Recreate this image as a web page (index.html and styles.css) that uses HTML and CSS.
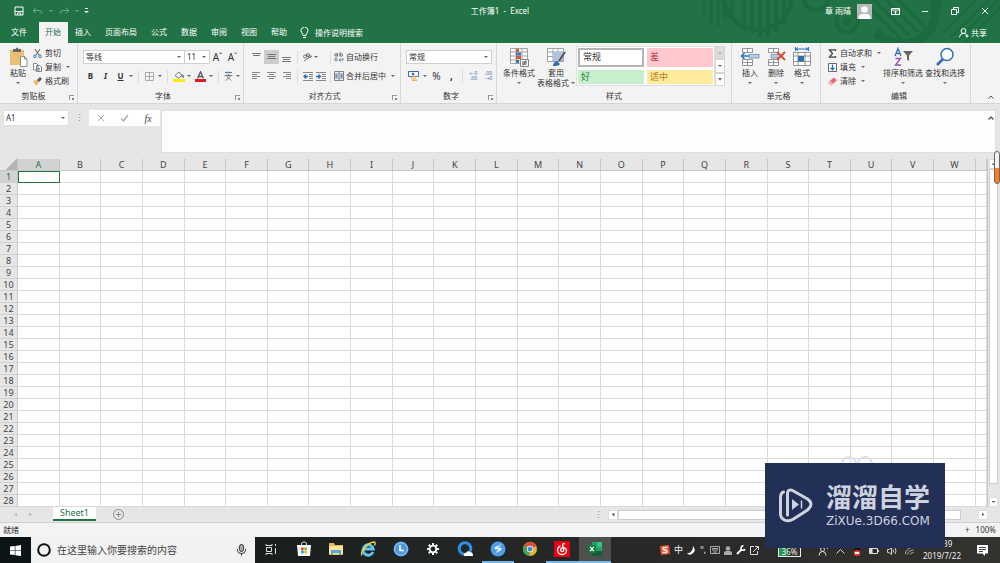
FILE: index.html
```
<!DOCTYPE html>
<html lang="zh-CN">
<head>
<meta charset="UTF-8">
<meta name="viewport" content="width=device-width, initial-scale=1.0">
<title>工作簿1 - Excel</title>
<link rel="stylesheet" href="styles.css">
</head>
<body>

<header class="app-header">
    <svg class="header-art" width="300" height="43" viewBox="0 0 300 43" fill="none" stroke="#1c6a3d">
        <path stroke-width="3" d="M4 0v17M11 0v24M18 0v26M25 0v20M32 0v12"/>
        <path stroke-width="4" d="M44 0v24M52 0v34M60 0v37M68 0v37M76 0v32M84 0v24"/>
        <circle cx="58" cy="-4" r="34" stroke-width="5"/>
        <circle cx="116" cy="-2" r="12" stroke-width="5"/>
        <circle cx="147" cy="21" r="11" stroke-width="4"/>
        <circle cx="147" cy="21" r="4" fill="#1c6a3d"/>
        <path stroke-width="2" d="M166 4l36 36M174 0l36 36M182 -4l36 36M190 -8l36 36"/>
        <path stroke-width="9" d="M176 32a34 34 0 0 0 60-22v-14"/>
        <path stroke-width="2" d="M250 38l44-44M258 40l44-44M266 42l44-44M244 32l34-34"/>
    </svg>
    <div class="title-bar">
        <div class="quick-access">
            <button aria-label="保存"><svg width="10" height="10" viewBox="0 0 10 10" fill="none" stroke="#fff"><path d="M1 1h8v8H1zM1 5.500h8M3.500 9V7h3v2"/></svg></button>
            <button class="faded" aria-label="撤消"><svg width="12" height="8" viewBox="0 0 12 8" fill="none" stroke="#fff"><path d="M4 1L1 3.500l3 2.500M1 3.500h6q3 0 3 3.500"/></svg></button>
            <i class="caret faded"></i>
            <button class="faded" aria-label="恢复"><svg width="12" height="8" viewBox="0 0 12 8" fill="none" stroke="#fff"><path d="M8 1l3 2.500L8 6M11 3.500H5Q2 3.500 2 7"/></svg></button>
            <i class="caret faded"></i>
            <button aria-label="自定义快速访问工具栏"><svg width="5" height="6" viewBox="0 0 5 6" fill="#fff"><path d="M1 0h3v1H1zM0 3h5L2.500 5z"/></svg></button>
        </div>
        <h1>工作簿1 &nbsp;- &nbsp;Excel</h1>
        <div class="window-tools">
            <span>章 雨晴</span>
            <svg class="avatar" width="15" height="15" viewBox="0 0 15 15"><path fill="#b8b8b8" d="M0 0h15v15H0z"/><circle cx="7.500" cy="5.500" r="3.300" fill="#fff"/><path d="M1.500 15q0-5 4-5h4q4 0 4 5z" fill="#fff"/></svg>
            <button aria-label="功能区显示选项"><svg width="9" height="7" viewBox="0 0 9 7" fill="none" stroke="#fff"><path d="M.5.5h8v6h-8zM.5 2h8M4.500 6V3M3 4.500L4.500 3 6 4.500"/></svg></button>
            <button aria-label="最小化"><svg width="8" height="8" viewBox="0 0 8 8" stroke="#fff"><path d="M1 4.500h6"/></svg></button>
            <button aria-label="还原"><svg width="8" height="8" viewBox="0 0 8 8" fill="none" stroke="#fff"><path d="M.5 2.500h5v5h-5zM2.500 2V.5h5v5H6"/></svg></button>
            <button aria-label="关闭"><svg width="8" height="8" viewBox="0 0 8 8" stroke="#fff"><path d="M1 1l6 6M7 1L1 7"/></svg></button>
        </div>
    </div>
    <nav class="tabs">
        <a href="#" class="file">文件</a>
        <a href="#" class="active">开始</a>
        <a href="#">插入</a>
        <a href="#">页面布局</a>
        <a href="#">公式</a>
        <a href="#">数据</a>
        <a href="#">审阅</a>
        <a href="#">视图</a>
        <a href="#">帮助</a>
        <a href="#" class="tell-me"><svg width="9" height="12" viewBox="0 0 9 12" fill="none" stroke="#fff"><path d="M3 8.500Q3 7 1.800 5.800A3.500 3.500 0 1 1 7.200 5.800Q6 7 6 8.500zM3 10.500h3"/></svg>操作说明搜索</a>
        <a href="#" class="share"><svg width="10" height="10" viewBox="0 0 10 10" fill="none" stroke="#fff"><circle cx="4.500" cy="3" r="2.400"/><path d="M.5 9.500q0-4 4-4 2 0 3 1M8 6.500v3M6.500 8h3"/></svg>共享</a>
    </nav>
</header>

<section class="ribbon">
    <div class="group clipboard">
        <div class="group-body">
            <button class="big"><svg width="20" height="20" viewBox="0 0 20 20"><path fill="#eabf74" d="M2 3h14v15H2z"/><path fill="#666" d="M5 5V2h2.500q1.500-3 3 0H13v3z"/><path fill="#fff" stroke="#777" stroke-width=".8" d="M12.500 9.500h4l2.500 2.500v7.500h-6.500zM16.500 9.500V12H19"/></svg>粘贴<i class="caret"></i></button>
            <div class="list">
                <button><svg width="9" height="9" viewBox="0 0 9 9" fill="none" stroke="#555"><path d="M2 0l4 6M7 0L3 6"/><circle cx="2" cy="7.300" r="1.300" stroke="#3b77b5"/><circle cx="7" cy="7.300" r="1.300" stroke="#3b77b5"/></svg>剪切</button>
                <button><svg width="9" height="9" viewBox="0 0 9 9" fill="#fff" stroke="#666" stroke-width=".8"><path d="M.5.5h3L5 2v5H.5zM3.500 2.500h3L8.500 4v4.500h-5z"/><path stroke="#3b77b5" d="M5 5.500h2M5 7h2"/></svg>复制<i class="caret"></i></button>
                <button><svg width="9" height="9" viewBox="0 0 9 9"><path fill="#eab765" d="M0 4l4-1 2 2-3 4z"/><path fill="#555" d="M4 3l3-3 2 2-3 3z"/></svg>格式刷</button>
            </div>
        </div>
        <div class="group-label">剪贴板</div><i class="launcher"></i>
    </div>

    <div class="group font">
        <div class="group-body rows">
            <div class="row">
                <span class="combo name"><select aria-label="字体"><option>等线</option></select></span>
                <span class="combo size"><select aria-label="字号"><option>11</option></select></span>
                <button class="tool letter">A<sup>ˆ</sup></button>
                <button class="tool letter">A<sup>ˇ</sup></button>
            </div>
            <div class="row">
                <button class="tool"><b>B</b></button>
                <button class="tool"><b><em>I</em></b></button>
                <button class="tool"><b><u>U</u></b></button>
                <i class="caret"></i><i class="sep"></i>
                <button class="tool" aria-label="边框"><svg width="9" height="9" viewBox="0 0 9 9" fill="none" stroke="#999" stroke-width=".8"><path d="M.5.5h8v8h-8zM4.500.5v8M.5 4.500h8"/></svg></button>
                <i class="caret"></i><i class="sep"></i>
                <button class="tool" aria-label="填充颜色"><svg width="12" height="11" viewBox="0 0 12 11"><path fill="#fff" stroke="#666" stroke-width=".9" d="M2 4.500L6 1l3 3.500L5.500 7z"/><path fill="#3b77b5" d="M9 3q3 2 1.500 4Q9 7 9 3z"/><path fill="#ffeb00" d="M0 8h12v3H0z"/></svg></button>
                <i class="caret"></i>
                <button class="tool" aria-label="字体颜色"><svg width="11" height="11" viewBox="0 0 11 11"><path fill="none" stroke="#555" stroke-width="1.300" d="M2.500 7.500L5.500.8l3 6.700M3.700 5.500h3.600"/><path fill="#e3171f" d="M0 8h11v3H0z"/></svg></button>
                <i class="caret"></i><i class="sep"></i>
                <button class="tool narrow" aria-label="显示拼音字段"><svg width="9" height="10" viewBox="0 0 9 10" fill="none" stroke="#666" stroke-width=".9"><path stroke="#3b77b5" d="M1 1.500h7M3 .5v2M6 .5v2"/><path d="M.5 4.500h8M4.500 3v1.500M2 4.500l5 5M7 4.500l-5 5"/></svg></button>
                <i class="caret"></i>
            </div>
        </div>
        <div class="group-label">字体</div><i class="launcher"></i>
    </div>

    <div class="group align">
        <div class="group-body rows">
            <div class="row">
                <button class="tool" aria-label="顶端对齐"><svg width="9" height="10" viewBox="0 0 9 10" stroke="#777"><path d="M0 1.500h9M1 3.500h7"/></svg></button>
                <button class="tool pressed" aria-label="垂直居中"><svg width="9" height="10" viewBox="0 0 9 10" stroke="#777"><path d="M0 2.500h9M1 4.500h7M0 6.500h9"/></svg></button>
                <button class="tool" aria-label="底端对齐"><svg width="9" height="10" viewBox="0 0 9 10" stroke="#777"><path d="M0 5.500h9M1 7.500h7M0 9.500h9"/></svg></button>
                <i class="sep"></i>
                <button class="tool narrow" aria-label="方向"><svg width="11" height="10" viewBox="0 0 11 10" fill="none" stroke="#666" stroke-width=".9"><circle cx="3" cy="4.500" r="1.500"/><circle cx="6" cy="3" r="1.500"/><path d="M4 2l3 4M2 9l7-5M7 3.500L9.500 4 8 6"/></svg></button>
                <i class="caret"></i>
                <i class="sep wide"></i>
                <button class="labelled"><svg width="10" height="10" viewBox="0 0 10 10" fill="none" stroke="#666" stroke-width=".9"><circle cx="2" cy="3" r="1.300"/><path d="M3.500 1v3.500M6 0v4.500"/><circle cx="7.300" cy="3" r="1.300"/><circle cx="2" cy="7.500" r="1.300"/><path stroke="#3b77b5" d="M9 6v2H5M6.500 6.500L5 8l1.500 1.500"/></svg>自动换行</button>
            </div>
            <div class="row">
                <button class="tool" aria-label="左对齐"><svg width="9" height="8" viewBox="0 0 9 8" stroke="#888"><path d="M0 .5h8M0 2.500h5M0 4.500h8M0 6.500h5"/></svg></button>
                <button class="tool" aria-label="居中"><svg width="9" height="8" viewBox="0 0 9 8" stroke="#888"><path d="M0 .5h9M2 2.500h5M0 4.500h9M2 6.500h5"/></svg></button>
                <button class="tool" aria-label="右对齐"><svg width="9" height="8" viewBox="0 0 9 8" stroke="#888"><path d="M1 .5h8M4 2.500h5M1 4.500h8M4 6.500h5"/></svg></button>
                <i class="sep"></i>
                <button class="tool narrow" aria-label="减少缩进量"><svg width="10" height="9" viewBox="0 0 10 9" fill="none" stroke="#888"><path d="M0 .5h10M6 2.500h4M6 4.500h4M6 6.500h4M0 8.500h10"/><path stroke="#2f6fb0" stroke-width="1.300" d="M5 4.500H1M3 2.500l-2 2 2 2"/></svg></button>
                <button class="tool narrow" aria-label="增加缩进量"><svg width="10" height="9" viewBox="0 0 10 9" fill="none" stroke="#888"><path d="M0 .5h10M6 2.500h4M6 4.500h4M6 6.500h4M0 8.500h10"/><path stroke="#2f6fb0" stroke-width="1.300" d="M0 4.500h4M2.500 2.500l2 2-2 2"/></svg></button>
                <i class="sep"></i>
                <button class="labelled"><svg width="10" height="10" viewBox="0 0 10 10" fill="none" stroke="#777" stroke-width=".9"><path d="M.5.5h9v9h-9zM.5 3h9M.5 7h9M5 .5V3M5 7v2.500"/><path stroke="#2f6fb0" d="M1.500 5h7M3 3.800L1.500 5 3 6.200M7 3.800L8.500 5 7 6.200"/></svg>合并后居中<i class="caret"></i></button>
            </div>
        </div>
        <div class="group-label">对齐方式</div><i class="launcher"></i>
    </div>

    <div class="group number">
        <div class="group-body rows">
            <div class="row">
                <span class="combo format"><select aria-label="数字格式"><option>常规</option></select></span>
            </div>
            <div class="row">
                <button class="tool" aria-label="会计数字格式"><svg width="11" height="10" viewBox="0 0 11 10"><path fill="#fff" stroke="#2f6fb0" d="M.5.5h10v5H.5z"/><circle cx="5" cy="3" r="1.300" fill="#2f6fb0"/><path fill="#e9b25c" d="M4 4.500h5v1.300H4zM3 6.500h5v1.300H3zM4 8.500h5V10H4z"/></svg></button>
                <i class="caret"></i>
                <button class="tool letter">%</button>
                <button class="tool letter"><b>,</b></button>
                <i class="sep"></i>
                <button class="tool decimals" aria-label="增加小数位数"><span>←0<br>.00</span></button>
                <button class="tool decimals" aria-label="减少小数位数"><span>.00<br>→0</span></button>
            </div>
        </div>
        <div class="group-label">数字</div><i class="launcher"></i>
    </div>

    <div class="group styles">
        <div class="group-body">
            <button class="big"><svg width="20" height="20" viewBox="0 0 20 20"><path fill="#fff" stroke="#999" stroke-width=".9" d="M1.500 1.500h17v15h-17zM1.500 5h17M1.500 9h17M1.500 13h17M7 1.500v15M13 1.500v15"/><path fill="#d6583f" d="M7 2h3v3H7zM7 9h5v3H7z"/><path fill="#3b77b5" d="M7 5.500h5v3H7zM7 13h3v3H7z"/><path fill="#fff" stroke="#777" stroke-width=".9" d="M11.500 12.500h8v7h-8z"/><path stroke="#444" stroke-width=".9" d="M13 15h5M13 17h5M17 13.500l-3 5"/></svg>条件格式<i class="caret"></i></button>
            <button class="big table-format"><svg width="20" height="20" viewBox="0 0 20 20"><path fill="#fff" stroke="#999" stroke-width=".9" d="M1.500 1.500h16v13h-16zM1.500 5h16M7 1.500v13M12 1.500v13M1.500 9.500h16"/><path fill="#aac4e2" d="M7 5h10v9H7z"/><path fill="#2f6fb0" d="M7 19q0-4 4-5l3 3q-1 2-7 2z"/><path stroke="#555" stroke-width="2" d="M13 14l6-9"/></svg>套用<span>表格格式<i class="caret"></i></span></button>
            <div class="gallery">
                <button class="swatch normal">常规</button>
                <button class="swatch bad">差</button>
                <button class="swatch good">好</button>
                <button class="swatch neutral">适中</button>
            </div>
            <div class="gallery-scroll">
                <button class="off" aria-label="上一行"><i class="caret up"></i></button>
                <button aria-label="下一行"><i class="caret"></i></button>
                <button aria-label="其他"><i class="caret more"></i></button>
            </div>
        </div>
        <div class="group-label">样式</div>
    </div>

    <div class="group cells">
        <div class="group-body">
            <button class="big"><svg width="20" height="20" viewBox="0 0 20 20"><path fill="#fff" stroke="#888" stroke-width=".9" d="M2.500 1.500h10v4h-10zM7.500 1.500v4M2.500 12.500h10v6h-10zM7.500 12.500v6M2.500 15.500h10"/><path fill="#b9cfe6" stroke="#6b8db3" stroke-width=".8" d="M9 7.500h10v3.500H9z"/><path fill="none" stroke="#2576c7" stroke-width="1.500" d="M9 9H1.500M4.500 6l-3 3 3 3"/></svg>插入<i class="caret"></i></button>
            <button class="big"><svg width="20" height="20" viewBox="0 0 20 20"><path fill="#fff" stroke="#888" stroke-width=".9" d="M2.500 1.500h10v4h-10zM7.500 1.500v4M2.500 12.500h10v6h-10zM7.500 12.500v6M2.500 15.500h10"/><path fill="#b9cfe6" stroke="#6b8db3" stroke-width=".8" d="M5 7.500h7v3.500H5z"/><path stroke="#d6482e" stroke-width="1.800" d="M11 5l8 8M19 5l-8 8"/></svg>删除<i class="caret"></i></button>
            <button class="big"><svg width="20" height="20" viewBox="0 0 20 20"><path fill="none" stroke="#2576c7" d="M3.500 0v4M16.500 0v4M4 2h12M6 .5L4 2l2 1.500M14 .5L16 2l-2 1.500"/><path fill="#fff" stroke="#888" stroke-width=".9" d="M1.500 5.500h17v13h-17zM1.500 9h17M1.500 14.500h17M6 5.500v13M13 5.500v13"/><path fill="#2f6fb0" d="M6 9h6v5.500H6z"/></svg>格式<i class="caret"></i></button>
        </div>
        <div class="group-label">单元格</div>
    </div>

    <div class="group editing">
        <div class="group-body">
            <div class="list">
                <button><svg width="9" height="9" viewBox="0 0 9 9" fill="none" stroke="#444" stroke-width="1.300"><path d="M7.500 2V.8H1.500L4.500 4.500 1.500 8.200h6V7"/></svg>自动求和<i class="caret"></i></button>
                <button><svg width="9" height="9" viewBox="0 0 9 9" fill="#fff" stroke="#666"><path d="M.5.5h8v8h-8z"/><path fill="none" stroke="#2576c7" stroke-width="1.300" d="M4.500 1.500v5M2.500 4.800l2 2 2-2"/></svg>填充<i class="caret"></i></button>
                <button><svg width="9" height="9" viewBox="0 0 9 9"><path fill="#e5697b" d="M0 6l5.500-5.500L9 3 3.500 8.500z"/><path fill="#f4b6bf" d="M0 6l2-2 3.500 2.500-2 2z"/></svg>清除<i class="caret"></i></button>
            </div>
            <button class="big sort"><svg width="20" height="20" viewBox="0 0 20 20" fill="none" stroke-width="1.400"><path stroke="#3b77b5" d="M2 9l3-7.500L8 9M3 6.500h4"/><path stroke="#9a53b5" d="M2.500 11.500h5l-5 6.500h5.500"/><path fill="#666" d="M10 4h10l-4 4.500v5.500l-2-1.500V8.500z"/></svg>排序和筛选<i class="caret"></i></button>
            <button class="big sort"><svg width="20" height="20" viewBox="0 0 20 20" fill="#fff" stroke="#2f6fb0"><path stroke-width="2.600" d="M8 12l-6 6"/><circle cx="12" cy="7.500" r="6" stroke-width="1.500"/></svg>查找和选择<i class="caret"></i></button>
        </div>
        <div class="group-label">编辑</div>
    </div>
    <button class="collapse" aria-label="折叠功能区"><svg width="6" height="4" viewBox="0 0 6 4" fill="none" stroke="#555"><path d="M.5 3.500L3 1l2.500 2.500"/></svg></button>
</section>

<section class="formula-bar">
    <span class="combo name-box"><select aria-label="名称框"><option>A1</option></select></span>
    <span class="dots">⋮</span>
    <div class="formula-buttons">
        <button aria-label="取消"><svg width="8" height="8" viewBox="0 0 8 8" stroke="#aaa"><path d="M1 1l6 6M7 1L1 7"/></svg></button>
        <button aria-label="输入"><svg width="9" height="8" viewBox="0 0 9 8" fill="none" stroke="#aaa" stroke-width="1.300"><path d="M1 4.500L3.500 7 8 1"/></svg></button>
        <button class="fx">fx</button>
    </div>
    <div class="formula-input">
        <textarea aria-label="编辑栏"></textarea>
        <svg width="6" height="4" viewBox="0 0 6 4" fill="none" stroke="#444" stroke-width="1.200"><path d="M.5 3.500L3 1l2.500 2.500"/></svg>
    </div>
</section>

<main class="sheet-area">
    <table class="sheet" id="sheet"></table>
    <div class="v-scroll">
        <button aria-label="向上滚动"><i class="caret up"></i></button>
        <div class="v-thumb"></div>
        <button aria-label="向下滚动"><i class="caret"></i></button>
    </div>
    <div class="level-marker"></div>
</main>

<div class="sheet-tabs">
    <span class="tab-arrows"><i class="caret left"></i><i class="caret right"></i></span>
    <a href="#" class="sheet-tab">Sheet1</a>
    <button class="add-sheet" aria-label="新工作表"><svg width="11" height="11" viewBox="0 0 11 11" fill="none" stroke="#888"><circle cx="5.500" cy="5.500" r="5"/><path d="M5.500 3v5M3 5.500h5"/></svg></button>
    <span class="dots">⋮</span>
    <div class="h-scroll">
        <button aria-label="向左滚动"><i class="caret left"></i></button>
        <div class="h-thumb"></div>
        <button aria-label="向右滚动"><i class="caret right"></i></button>
    </div>
</div>

<div class="status-bar">
    <span>就绪</span>
    <span class="zoom-level"><span class="plus">+</span>100%</span>
</div>

<footer class="taskbar">
    <button class="start" aria-label="开始"><svg width="11" height="11" viewBox="0 0 11 11" fill="#fff"><path d="M0 1.600L4.800 1v4.200H0zM5.400.9L11 0v5.200H5.400zM0 5.800h4.800V10L0 9.400zM5.400 5.800H11V11l-5.600-.8z"/></svg></button>
    <label class="search">
        <svg width="14" height="14" viewBox="0 0 14 14" fill="none" stroke="#111" stroke-width="2"><circle cx="7" cy="7" r="5.800"/></svg>
        <input type="text" placeholder="在这里输入你要搜索的内容">
        <svg width="9" height="12" viewBox="0 0 9 12" fill="none" stroke="#333"><rect x="2.500" y=".5" width="4" height="7" rx="2" fill="#aaa"/><path d="M.5 5v1.500q0 3 4 3t4-3V5M4.500 9.500v2"/></svg>
    </label>
    <div class="apps">
        <button aria-label="任务视图"><svg width="12" height="12" viewBox="0 0 12 12" fill="none" stroke="#ddd"><path d="M1 1v1.500h6V1M1.500 4.500h5v4h-5zM1 12v-1.500h6V12M10.500 1v2M10.500 5v6"/></svg></button>
        <button aria-label="应用商店"><svg width="16" height="16" viewBox="0 0 16 16"><path fill="none" stroke="#ddd" d="M5.500 4V2q2.500-2.500 5 0v2"/><path fill="#fff" d="M1 4h14l-1 11H2z"/><path fill="#e8502f" d="M5 6.500h2.800v2.800H5z"/><path fill="#7bb93a" d="M8.200 6.500H11v2.800H8.200z"/><path fill="#2f9be0" d="M5 9.700h2.800v2.800H5z"/><path fill="#f6b62b" d="M8.200 9.700H11v2.800H8.200z"/></svg></button>
        <button aria-label="文件资源管理器"><svg width="16" height="16" viewBox="0 0 16 16"><path fill="#e6b84f" d="M1 2h5l1 2h8v10H1z"/><path fill="#fce49b" d="M1 5h14v8H1z"/><path fill="#57a9dc" d="M3 9h10v5h-2v-2H5v2H3z"/></svg></button>
        <button aria-label="Internet Explorer"><svg width="16" height="16" viewBox="0 0 16 16" fill="none"><path stroke="#5fc6f2" stroke-width="2.800" d="M13 11a5.200 5.200 0 1 1 .3-3H4"/><path stroke="#f3cf3c" stroke-width="1.400" d="M2 14.500C-1 12 8 1 14 1q2 .5.500 3.500"/></svg></button>
        <button aria-label="时钟"><svg width="16" height="16" viewBox="0 0 16 16"><circle cx="8" cy="8" r="7.500" fill="#4d97e0"/><circle cx="8" cy="8" r="6.300" fill="none" stroke="#9cc9f5"/><path fill="none" stroke="#fff" stroke-width="1.600" d="M7 4v5.500h4"/></svg></button>
        <button aria-label="设置"><svg width="14" height="14" viewBox="0 0 14 14" fill="none" stroke="#fff"><circle cx="7" cy="7" r="3.300" stroke-width="1.800"/><path stroke-width="2" d="M7 1v2M7 11v2M1 7h2M11 7h2M2.800 2.800l1.400 1.400M9.800 9.800l1.400 1.400M2.800 11.200l1.400-1.400M9.800 4.200l1.400-1.400"/></svg></button>
        <button aria-label="QQ浏览器"><svg width="16" height="16" viewBox="0 0 16 16"><circle cx="8" cy="7.500" r="5.800" fill="none" stroke="#2a8fe8" stroke-width="3"/><path fill="#fff" d="M7 15q-1-3 2-3 1-3 4-1 3 0 3 4z"/></svg></button>
        <button class="running" aria-label="助手"><svg width="16" height="16" viewBox="0 0 16 16"><circle cx="8" cy="8" r="7.500" fill="#4d9eea"/><path fill="#fff" d="M12 3L4.500 6.500Q4 8 6 8.500l3-1-1 1.500-3 3.500 6-3.500q1.500-1.500-1-2.500L7 7z"/></svg></button>
        <button aria-label="Chrome"><svg width="16" height="16" viewBox="0 0 16 16"><circle cx="8" cy="8" r="7" fill="#e1b92f"/><path fill="#d9503f" d="M8 8L2 4.300A7 7 0 0 1 14.500 5z"/><path fill="#46a052" d="M8 8l-.5 7A7 7 0 0 1 2 4.300z"/><circle cx="8" cy="8" r="3.200" fill="#fff"/><circle cx="8" cy="8" r="2.500" fill="#4a86d8"/></svg></button>
        <button class="running" aria-label="网易云音乐"><svg width="16" height="16" viewBox="0 0 16 16"><path fill="#e60012" d="M0 0h16v16H0z"/><path fill="none" stroke="#fff" stroke-width="1.300" d="M11 3Q8.500 2 8.500 4l1.300 5q0 1.500-1.600 1.500T6.500 9q0-2 3-2.400 3 .4 3 3.400-.5 3.500-4.500 3.500T3.500 9Q3.500 6 6.500 4.800"/></svg></button>
        <button class="running active" aria-label="Excel"><svg width="16" height="16" viewBox="0 0 16 16"><path fill="#21a366" d="M5 1h10v14H5z"/><path fill="#33c481" d="M10 1h5v5h-5z"/><path fill="#185c37" d="M5 10h10v5H5z"/><path fill="#107c41" d="M1 4h8v8H1z"/><path stroke="#fff" stroke-width="1.300" d="M3.200 5.800l3.600 4.400M6.800 5.800l-3.600 4.400"/></svg></button>
    </div>
    <div class="ime">
        <svg width="10" height="10" viewBox="0 0 10 10"><path fill="#ee4f2c" d="M0 1l9-1 1 9-9 1z"/><path fill="none" stroke="#fff" stroke-width="1.400" d="M7.500 2.500H3.500q-1.500 2 1.500 2.500t1.500 2.500h-4"/></svg>
        <span>中</span>
        <svg width="9" height="9" viewBox="0 0 9 9" fill="#fff"><path d="M6 0q4 5-1 8-3 1.500-5-.5Q6 7 6 0z"/></svg>
        <span>°,</span>
        <svg width="10" height="8" viewBox="0 0 10 8" fill="none" stroke="#ccc" stroke-width=".8"><path d="M.5.5h9v7h-9zM2 2.500h6M2 4h6M3 6h4"/></svg>
        <svg width="8" height="9" viewBox="0 0 8 9" fill="#aaa"><circle cx="4" cy="2.500" r="2.300"/><path d="M0 9V7q0-2 2-2h4q2 0 2 2v2z"/></svg>
        <svg width="10" height="10" viewBox="0 0 10 10" fill="none" stroke="#fff"><path stroke-width="2" d="M1 9l5-5"/><path stroke-width="1.600" d="M7.500.8Q4.500 1 5.200 4q.8 2.300 4 .5"/></svg>
        <svg width="9" height="9" viewBox="0 0 9 9" fill="none" stroke="#ddd"><path d="M4 .5H.5v8h7V5M3 6l5-5M5 .5h3.500V4"/></svg>
    </div>
    <div class="battery"><span>36%</span></div>
    <div class="tray">
        <svg width="10" height="10" viewBox="0 0 10 10" fill="none" stroke="#ddd"><circle cx="4.500" cy="3.500" r="2"/><path d="M1 9.500q0-4 3.500-4T8 9.500M6.500 1.500q3-1 3 1.500"/></svg>
        <svg width="9" height="5" viewBox="0 0 9 5" fill="none" stroke="#ddd"><path d="M.5 4.500l4-4 4 4"/></svg>
        <svg width="8" height="9" viewBox="0 0 8 9"><circle cx="4" cy="3" r="3" fill="#111"/><ellipse cx="4" cy="6" rx="3.500" ry="3" fill="#e23b2d"/><path fill="#fff" d="M2 5h4v2H2z"/></svg>
        <svg width="10" height="6" viewBox="0 0 10 6" fill="none" stroke="#ddd"><path d="M.5.5h8v5h-8zM9.500 2v2"/><path fill="#ddd" d="M1 1h2v4H1z"/></svg>
        <svg width="10" height="8" viewBox="0 0 10 8" fill="none" stroke="#ddd" stroke-width=".9"><path d="M.5 2.500H2L4.500.5v7L2 5.500H.5zM6 2.500q1 1.500 0 3M8 1q2 3 0 6"/></svg>
        <svg width="9" height="8" viewBox="0 0 9 8" fill="none" stroke="#bbb" stroke-width=".9"><path d="M0 7.500Q1 1 8.500 0M2.500 7.500Q3 3.500 8.500 3M5 7.500q.5-2 3.500-2"/></svg>
    </div>
    <div class="clock">10:39<br>2019/7/22</div>
    <button class="notify" aria-label="通知"><svg width="11" height="11" viewBox="0 0 11 11"><path fill="#fff" d="M0 0h11v8.500H8V11L5.500 8.500H0z"/><path stroke="#333" stroke-width=".9" d="M2 2.500h7M2 4.500h7M2 6.500h4"/></svg></button>
</footer>

<svg class="cloud" width="34" height="16" viewBox="0 0 34 16" fill="none" stroke="#dde1e6" stroke-width="2"><circle cx="9" cy="9" r="7"/><circle cx="25" cy="9" r="7"/></svg>
<div class="watermark">
    <svg width="36" height="38" viewBox="0 0 36 38" fill="none" stroke="#cdd2de" stroke-linecap="round">
        <path stroke-width="3" d="M9.500 28V7q0-6 6-3l14 8q7 5 0 11l-14 9q-5 3-9 1-4-2-4-6V11q0-5 3-6"/>
        <path fill="#cdd2de" stroke="none" d="M14 12l7 5.500-7 5.500z"/>
        <path stroke-width="1.500" d="M23.500 14v7"/>
    </svg>
    <div class="watermark-text">
        <strong>溜溜自学</strong>
        <span>ZiXUe.3D66.COM</span>
    </div>
</div>

<script>
    var sheet = document.getElementById('sheet');
    var letters = 'ABCDEFGHIJKLMNOPQRSTUVW'.split('');
    var rowCount = 28;

    var html = '<thead><tr><th class="corner"></th>';
    letters.forEach(function(letter, i) {
        html += '<th' + (i === 0 ? ' class="selected"' : '') + '>' + letter + '</th>';
    });
    html += '<th class="rest"></th></tr></thead><tbody>';

    for (var r = 1; r <= rowCount; r++) {
        html += '<tr><th' + (r === 1 ? ' class="selected"' : '') + '>' + r + '</th>';
        for (var c = 0; c <= letters.length; c++) {
            html += '<td' + (r === 1 && c === 0 ? ' class="current"' : '') + '></td>';
        }
        html += '</tr>';
    }
    sheet.innerHTML = html + '</tbody>';
</script>

</body>
</html>
```

FILE: styles.css
```
* {
    box-sizing: border-box;
}
body {
    font-family: "Noto Sans", "Noto Sans CJK SC", sans-serif;
    font-size: 8px;
    line-height: 12px;
    color: #333;
    background: #e6e6e6;
    margin: 0;
    min-height: 100vh;
    position: relative;
    display: flex;
    flex-direction: column;
    overflow: hidden;
}
button, select, input, textarea {
    font: inherit;
    color: inherit;
    background: none;
    border: 0;
    border-radius: 0;
    margin: 0;
    padding: 0;
    outline: none;
}
button {
    display: flex;
    align-items: center;
    justify-content: center;
    white-space: nowrap;
}
a {
    color: inherit;
    text-decoration: none;
}
svg {
    display: block;
    flex: none;
}
.caret {
    flex: none;
    width: 4px;
    height: 2px;
    background: #666;
    clip-path: polygon(0 0, 100% 0, 50% 100%);
}
.caret.up {
    clip-path: polygon(50% 0, 100% 100%, 0 100%);
}
.caret.left, .caret.right {
    width: 3px;
    height: 4px;
    clip-path: polygon(0 50%, 100% 0, 100% 100%);
}
.caret.right {
    clip-path: polygon(0 0, 100% 50%, 0 100%);
}

/* header */
.app-header {
    position: relative;
    background: #217346;
    color: #fff;
    overflow: hidden;
}
.header-art {
    position: absolute;
    top: 0;
    right: 0;
}
.title-bar {
    position: relative;
    display: grid;
    grid-template-columns: 1fr auto 1fr;
    align-items: center;
    height: 22px;
    line-height: 20px;
}
.title-bar h1 {
    font-size: 8px;
    font-weight: normal;
    margin: 0;
}
.quick-access {
    display: flex;
    align-items: center;
    gap: 5px;
    padding-left: 14px;
}
.quick-access button:first-child {
    margin-right: 3px;
}
.quick-access .caret {
    background: #fff;
}
.faded {
    opacity: 0.35;
}
.window-tools {
    display: flex;
    align-items: center;
    justify-content: flex-end;
}
.avatar {
    margin: 0 8px 0 6px;
}
.window-tools button {
    width: 30px;
    height: 20px;
}
.tabs {
    position: relative;
    display: flex;
    height: 21px;
    line-height: 20px;
}
.tabs a {
    padding: 0 7px;
}
.tabs .file {
    margin: 0 5px 0 4px;
}
.tabs .active {
    padding-left: 6px;
    background: #f3f3f3;
    color: #217346;
}
.tabs .tell-me, .tabs .share {
    display: flex;
    align-items: center;
    gap: 6px;
}
.tabs .tell-me {
    padding-left: 6px;
}
.tabs .share {
    margin-left: auto;
    gap: 2px;
    padding-right: 13px;
}

/* ribbon */
.ribbon {
    display: flex;
    height: 61px;
    background: #f3f3f3;
    border-bottom: 1px solid #d5d5d5;
}
.group {
    position: relative;
    flex: none;
    display: flex;
    flex-direction: column;
    padding-top: 3px;
    border-right: 1px solid #d8d8d8;
}
.group-body {
    flex: 1;
    display: flex;
}
.group-label {
    text-align: center;
    height: 13px;
}
.launcher {
    position: absolute;
    right: 3px;
    bottom: 3px;
    width: 5px;
    height: 5px;
    border-left: 1px solid #999;
    border-top: 1px solid #999;
    background: linear-gradient(#888, #888) 100% 100% / 2px 2px no-repeat;
}
.clipboard {
    width: 78px;
    padding-right: 10px;
}
.font {
    width: 166px;
    padding-left: 5px;
}
.align {
    width: 157px;
    padding-left: 5px;
}
.number {
    width: 96px;
    padding-left: 5px;
}
.styles {
    width: 235px;
}
.cells {
    width: 89px;
    padding-left: 5px;
}
.editing {
    width: 150px;
    padding-left: 7px;
}
.big {
    flex-direction: column;
    justify-content: flex-start;
    width: 26px;
    line-height: 10px;
}
.big svg {
    margin: 1px 0;
}
.big > .caret {
    margin-top: 4px;
}
.clipboard .big {
    width: 32px;
    padding-left: 5px;
}
.styles .big {
    width: 36px;
    margin-left: 4px;
}
.styles .table-format {
    margin: 0 0 0 -1px;
    width: 40px;
}
.table-format span {
    display: flex;
    align-items: center;
    gap: 2px;
}
.editing .big {
    width: 42px;
}
.list {
    display: flex;
    flex-direction: column;
    width: 54px;
}
.clipboard .list {
    width: 36px;
    padding-left: 2px;
}
.list button {
    height: 14px;
    gap: 3px;
    justify-content: flex-start;
}
.list .caret {
    margin-left: 2px;
}
.rows {
    flex-direction: column;
    padding-top: 4px;
    gap: 5px;
}
.row {
    display: flex;
    align-items: center;
    height: 14px;
}
.tool {
    width: 15px;
    height: 14px;
}
.tool.narrow {
    width: 13px;
}
.tool.pressed {
    background: #cdcdcd;
}
.tool.letter {
    font-size: 10px;
}
.tool sup {
    font-size: 8px;
    line-height: 8px;
}
.tool.decimals {
    font-size: 5px;
    line-height: 5px;
    color: #2f6fb0;
}
.sep {
    width: 1px;
    height: 13px;
    background: #dedede;
    margin: 0 3px;
}
.sep.wide {
    margin-left: 12px;
}
.font .caret {
    margin: 0 2px 0 1px;
}
.number .caret {
    margin: 0 2px;
}
.labelled {
    gap: 2px;
}
.labelled .caret {
    margin-left: 3px;
}
.combo {
    position: relative;
    display: flex;
    align-items: center;
    height: 14px;
    background: #fff;
    border: 1px solid #d0d0d0;
}
.combo select {
    appearance: none;
    width: 100%;
    padding-left: 2px;
}
.combo::after {
    content: "";
    position: absolute;
    right: 3px;
    width: 4px;
    height: 2px;
    background: #666;
    clip-path: polygon(0 0, 100% 0, 50% 100%);
}
.combo.name {
    width: 102px;
}
.combo.size {
    width: 25px;
    border-left: 0;
}
.combo.format {
    width: 86px;
}
.gallery {
    display: grid;
    grid-template-columns: 1fr 1fr;
    gap: 3px;
    width: 139px;
    height: 40px;
    padding: 1px;
    background: #fff;
    border: 1px solid #e0e0e0;
}
.swatch {
    justify-content: flex-start;
    padding-left: 3px;
    font-size: 9px;
}
.swatch.normal {
    border: 2px solid #b5b5b5;
}
.swatch.bad {
    background: #ffc7ce;
    color: #b32c33;
}
.swatch.good {
    background: #c6efce;
    color: #2b7a30;
}
.swatch.neutral {
    background: #ffeb9c;
    color: #b07a1c;
}
.gallery-scroll {
    display: flex;
    flex-direction: column;
    width: 10px;
    height: 40px;
}
.gallery-scroll button {
    flex: 1;
    background: #fff;
    border: 1px solid #d5d5d5;
}
.gallery-scroll .off {
    background: #dcdcdc;
}
.gallery-scroll .up {
    background: #aaa;
}
.caret.more {
    height: 3px;
}
.collapse {
    margin-left: auto;
    align-self: flex-end;
    width: 18px;
    height: 12px;
}

/* formula bar */
.formula-bar {
    display: flex;
    align-items: flex-start;
    padding: 6px 4px 6px 3px;
}
.name-box {
    width: 66px;
    height: 16px;
    border-color: #e0e0e0;
}
.dots {
    width: 20px;
    text-align: center;
    line-height: 16px;
    font-size: 9px;
    color: #888;
}
.formula-buttons {
    display: flex;
    width: 71px;
    height: 16px;
    background: #fff;
}
.formula-buttons button {
    flex: 1;
}
.formula-buttons .fx {
    font: italic 10px "Liberation Serif", serif;
    color: #444;
}
.formula-input {
    flex: 1;
    display: flex;
    align-items: flex-start;
    height: 43px;
    margin-left: 1px;
    padding: 5px 1px;
    background: #fdfdfd;
    border: 1px solid #dedede;
}
.formula-input textarea {
    flex: 1;
    height: 30px;
    resize: none;
}

/* sheet */
.sheet-area {
    position: relative;
    display: flex;
}
.sheet {
    flex: 1;
    table-layout: fixed;
    width: 100%;
    border-spacing: 0;
    background: #fff;
}
.sheet th, .sheet td {
    height: 12px;
    padding: 0;
    border-right: 1px solid #dadada;
    border-bottom: 1px solid #dadada;
    font-size: 9px;
    line-height: 11px;
}
.sheet th {
    font-weight: normal;
    color: #444;
    background: #e6e6e6;
    border-color: #c6c6c6;
}
.sheet tbody th {
    border-bottom-color: #d2d2d2;
}
.sheet .corner {
    width: 18px;
    background: linear-gradient(135deg, #e6e6e6 60%, #b5b5b5 60%);
}
.sheet .rest {
    width: 11px;
}
.sheet th.selected {
    background: #d2d2d2;
    color: #217346;
}
.sheet .current {
    outline: 1px solid #217346;
    outline-offset: -1px;
    border-color: #217346;
}
.v-scroll {
    flex: none;
    width: 13px;
    display: flex;
    flex-direction: column;
    padding: 0 2px 0 1px;
    border-left: 1px solid #c6c6c6;
}
.v-scroll button {
    height: 10px;
    background: #fff;
    border: 1px solid #ddd;
}
.v-thumb {
    flex: 1;
    margin-bottom: 13px;
    background: #fff;
    border: 1px solid #ccc;
}
.level-marker {
    position: absolute;
    top: -8px;
    right: 0;
    width: 6px;
    height: 33px;
    border: 1px solid #666;
    border-radius: 3px;
    background: linear-gradient(#f2f2f2 50%, #f58025 50%);
}

/* sheet tabs and status */
.sheet-tabs {
    display: flex;
    align-items: center;
    height: 16px;
    border-bottom: 1px solid #cfcfcf;
}
.tab-arrows {
    display: flex;
    gap: 12px;
    width: 53px;
    padding-left: 14px;
    opacity: 0.3;
}
.sheet-tab {
    align-self: flex-start;
    width: 43px;
    height: 14px;
    text-align: center;
    font-size: 9px;
    color: #217346;
    background: #fff;
    border-bottom: 2px solid #217346;
}
.add-sheet {
    margin: 0 auto 0 17px;
}
.h-scroll {
    display: flex;
    width: 38%;
    height: 10px;
    margin-right: 12px;
}
.h-scroll button {
    width: 10px;
    background: #fff;
    border: 1px solid #ddd;
}
.h-thumb {
    flex: 1;
    margin-right: 17px;
    background: #fff;
    border: 1px solid #ccc;
}
.status-bar {
    flex: 1;
    display: flex;
    align-items: center;
    justify-content: space-between;
    min-height: 14px;
    padding: 0 4px 0 3px;
    background: #f3f3f3;
}
.zoom-level .plus {
    margin-right: 6px;
}

/* taskbar */
.taskbar {
    display: flex;
    align-items: center;
    height: 26px;
    color: #eee;
    background: linear-gradient(90deg, #0b1414, #202423 40%, #33322f);
}
.start {
    width: 31px;
}
.search {
    display: flex;
    align-items: center;
    gap: 6px;
    width: 224px;
    height: 26px;
    padding: 0 9px 0 6px;
    background: #f2f2f2;
}
.search input {
    flex: 1;
    min-width: 0;
    font-size: 10px;
}
.search input::placeholder {
    color: #444;
}
.apps {
    display: flex;
    width: 356px;
    height: 26px;
}
.apps button {
    flex: 1;
    border-bottom: 2px solid transparent;
}
.apps .running {
    border-color: #76b9ed;
}
.apps .active {
    background: #50504f;
}
.ime {
    display: flex;
    align-items: center;
    justify-content: space-between;
    width: 99px;
    margin-left: auto;
    font-size: 9px;
}
.battery {
    width: 23px;
    height: 11px;
    margin: 2px 17px 0 19px;
    border: 1px solid #eee;
    background: linear-gradient(90deg, #1f9a52 36%, #333 36%);
    line-height: 9px;
    text-align: center;
}
.tray {
    display: flex;
    align-items: center;
    justify-content: space-between;
    width: 96px;
    padding-top: 2px;
}
.clock {
    width: 56px;
    text-align: center;
    line-height: 12px;
    white-space: nowrap;
}
.notify {
    width: 30px;
    padding-right: 6px;
}

/* watermark */
.cloud {
    position: absolute;
    right: 126px;
    bottom: 92px;
}
.watermark {
    position: absolute;
    right: 55px;
    bottom: 15px;
    display: flex;
    align-items: center;
    gap: 12px;
    width: 180px;
    height: 85px;
    padding-left: 13px;
    background: #222f56;
    color: #cdd2de;
}
.watermark-text {
    display: flex;
    flex-direction: column;
}
.watermark-text strong {
    font-size: 26px;
    line-height: 26px;
}
.watermark-text span {
    font-family: "DejaVu Sans", sans-serif;
    font-size: 12px;
    line-height: 12px;
    margin-top: 5px;
}
```
